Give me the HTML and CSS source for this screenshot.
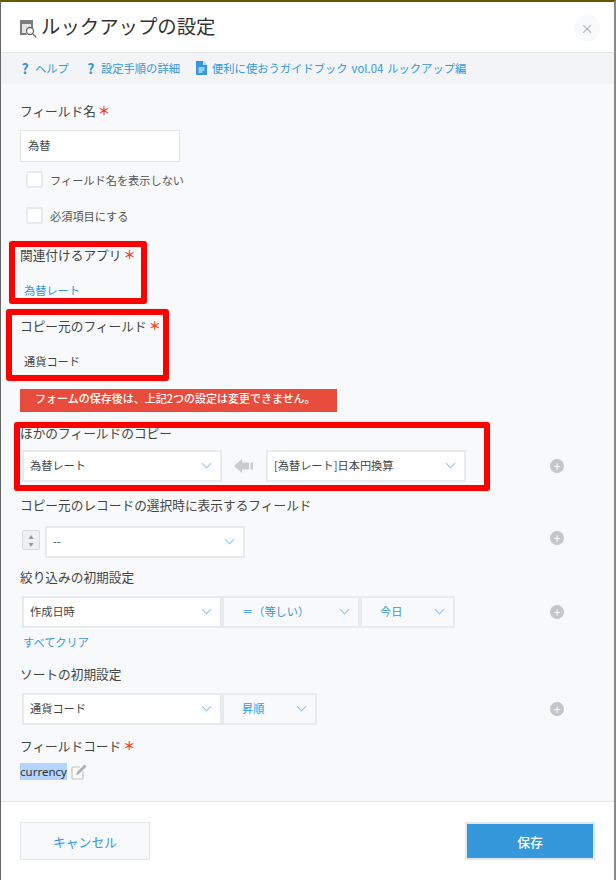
FILE: index.html
```html
<!DOCTYPE html>
<html lang="ja">
<head>
  <meta charset="UTF-8">
  <title>ルックアップの設定</title>
  <link rel="stylesheet" href="styles.css">
</head>
<body>
  <div class="dialog">
    <div class="header">
      <svg class="title-icon" width="17" height="18" viewBox="0 0 17 18">
        <path d="M0 0h13v8a5 5 0 0 0-6 7H0z" fill="#7c7c7c"/>
        <path d="M2 4h9v4a5 5 0 0 0-5 5H2z" fill="#e4e4e4"/>
        <circle cx="10" cy="11" r="3.500" fill="#fff" stroke="#666" stroke-width="1.300"/>
        <path d="M12.600 13.600l3.600 3.600" stroke="#666" stroke-width="1.300"/>
      </svg>
      <div class="title">ルックアップの設定</div>
      <div class="close">×</div>
    </div>
    <div class="links">
      <a class="link"><span class="q">?</span>ヘルプ</a>
      <a class="link"><span class="q">?</span>設定手順の詳細</a>
      <a class="link guide">
        <svg width="11" height="14" viewBox="0 0 11 14">
          <path d="M0 0h7l4 4v10H0z" fill="#3498db"/>
          <path d="M7 0v4h4z" fill="#bfe0f5"/>
          <path d="M2.500 7h6M2.500 9h6M2.500 11h4" stroke="#fff" stroke-width="1"/>
        </svg>便利に使おうガイドブック vol.04 ルックアップ編</a>
    </div>

    <div class="content">
      <div class="label first">フィールド名<span class="req">＊</span></div>
      <div class="input">為替</div>
      <div class="check-row"><span class="check"></span>フィールド名を表示しない</div>
      <div class="check-row second"><span class="check"></span>必須項目にする</div>

      <div class="label app-label">関連付けるアプリ<span class="req">＊</span></div>
      <div class="value value-link">為替レート</div>

      <div class="label src-label">コピー元のフィールド<span class="req">＊</span></div>
      <div class="value">通貨コード</div>

      <div class="alert">フォームの保存後は、上記2つの設定は変更できません。</div>

      <div class="label copy-label">ほかのフィールドのコピー</div>
      <div class="row copy-row">
        <div class="select w200">為替レート<i class="chev"></i></div>
        <svg class="arrow" width="20" height="14" viewBox="0 0 20 14">
          <path d="M0 7l8-7v3.500h7v7H8V14z" fill="#c9cccf"/>
          <path d="M16.500 3.500H19v7h-2.500z" fill="#c9cccf"/>
        </svg>
        <div class="select w200">[為替レート]日本円換算<i class="chev"></i></div>
        <span class="plus">+</span>
      </div>

      <div class="label show-label">コピー元のレコードの選択時に表示するフィールド</div>
      <div class="row show-row">
        <div class="spin"><span>▲</span><span>▼</span></div>
        <div class="select w200">--<i class="chev"></i></div>
        <span class="plus">+</span>
      </div>

      <div class="label filter-label">絞り込みの初期設定</div>
      <div class="row joined">
        <div class="select w200">作成日時<i class="chev"></i></div>
        <div class="select op w138">＝（等しい）<i class="chev"></i></div>
        <div class="select op w95">今日<i class="chev"></i></div>
        <span class="plus">+</span>
      </div>
      <div class="clear">すべてクリア</div>

      <div class="label sort-label">ソートの初期設定</div>
      <div class="row joined">
        <div class="select w200">通貨コード<i class="chev"></i></div>
        <div class="select op w95">昇順<i class="chev"></i></div>
        <span class="plus">+</span>
      </div>

      <div class="label code-label">フィールドコード<span class="req">＊</span></div>
      <div class="code-row">
        <span class="code">currency</span>
        <svg width="16" height="16" viewBox="0 0 16 16">
          <path d="M12 7.500V14a1 1 0 0 1-1 1H2a1 1 0 0 1-1-1V4a1 1 0 0 1 1-1h7" fill="none" stroke="#c4c4c4" stroke-width="1.200"/>
          <path d="M13.500 0.500l2 2L8 10l-3 1 1-3z" fill="#b0b0b0"/>
        </svg>
      </div>
    </div>

    <div class="footer">
      <button class="btn cancel">キャンセル</button>
      <button class="btn save">保存</button>
    </div>

    <div class="mark mark-app"></div>
    <div class="mark mark-src"></div>
    <div class="mark mark-copy"></div>
  </div>
</body>
</html>
```

FILE: styles.css
```css
* {
  box-sizing: border-box;
}
html, body {
  margin: 0;
  padding: 0;
  background: #fff;
}
body {
  font-family: "Noto Sans CJK JP", "Noto Sans", sans-serif;
  color: #333;
}
.dialog {
  position: relative;
  width: 616px;
  height: 880px;
  display: flex;
  flex-direction: column;
  border-top: 2px solid #6b5600;
  border-left: 1px solid #666;
  border-right: 2px solid #8a8a8a;
  overflow: hidden;
}
.header {
  height: 51px;
  flex: none;
  display: flex;
  align-items: center;
  background: #fff;
  border-bottom: 1px solid #e3e7e8;
  padding: 0 14px 0 19px;
}
.title-icon {
  margin-right: 4px;
  margin-top: 4px;
}
.title {
  font-size: 19.4px;
  line-height: 26px;
  color: #333;
  flex: 1;
  margin-top: -2px;
}
.close {
  width: 26px;
  height: 26px;
  border-radius: 50%;
  background: #f7f9fa;
  color: #a8a8a8;
  font-size: 13px;
  line-height: 26px;
  text-align: center;
  margin-top: 2px;
}
.links {
  height: 31px;
  flex: none;
  display: flex;
  align-items: center;
  gap: 17px;
  padding: 0 0 2px 19px;
  background: #f2f4f6;
}
.link {
  display: flex;
  align-items: center;
  gap: 5px;
  font-size: 11.3px;
  color: #3498db;
}
.guide {
  margin-left: -1px;
  word-spacing: 1.5px;
}
.q {
  width: 10px;
  text-align: center;
  font-size: 14px;
  font-weight: 700;
  line-height: 1;
}
.content {
  flex: 1;
  background: #f7f9fa;
  padding: 0 19px;
}
.label {
  font-size: 12.7px;
  line-height: 18px;
  color: #444;
}
.req {
  color: #f0442e;
  font-size: 12px;
  font-weight: 700;
  line-height: 18px;
  margin-left: 2px;
}
.first {
  margin-top: 18px;
}
.input {
  width: 160px;
  height: 32px;
  margin-top: 10px;
  padding-left: 7px;
  background: #fff;
  border: 1px solid #e3e7e8;
  font-size: 11.2px;
  line-height: 29px;
  color: #444;
}
.check-row {
  display: flex;
  align-items: center;
  gap: 7px;
  height: 17px;
  margin: 9px 0 0 6px;
  font-size: 11.2px;
  color: #555;
}
.check-row.second {
  margin-top: 19px;
}
.check {
  width: 17px;
  height: 17px;
  background: #fff;
  border: 2px solid #e8ebed;
  border-radius: 2px;
}
.app-label {
  margin-top: 22px;
}
.value {
  font-size: 11.2px;
  line-height: 16px;
  margin: 18px 0 0 4px;
  color: #444;
}
.value-link {
  color: #3498db;
}
.src-label {
  margin-top: 19px;
}
.alert {
  width: 317px;
  height: 23px;
  margin-top: 20px;
  padding-left: 15px;
  background: #e74c3c;
  color: #fff;
  font-size: 11px;
  font-weight: 500;
  line-height: 19px;
}
.copy-label {
  margin-top: 12px;
}
.row {
  position: relative;
  display: flex;
  align-items: center;
  margin-left: 2px;
  height: 32px;
}
.copy-row {
  margin-top: 8px;
}
.select {
  position: relative;
  height: 32px;
  background: #fff;
  border: 2px solid #e8ebed;
  font-size: 11.2px;
  line-height: 27px;
  padding-left: 6px;
  color: #444;
}
.w200 {
  width: 200px;
}
.w138 {
  width: 138px;
}
.w95 {
  width: 95px;
}
.select.op {
  background: #f7f9fa;
  color: #3498db;
  padding-left: 18px;
}
.chev {
  position: absolute;
  right: 10px;
  top: 8px;
  width: 7px;
  height: 7px;
  border-right: 1px solid #8ec7ee;
  border-bottom: 1px solid #8ec7ee;
  transform: rotate(45deg);
}
.arrow {
  margin: 0 12px;
}
.plus {
  position: absolute;
  left: 528px;
  top: 9px;
  width: 14px;
  height: 14px;
  border-radius: 50%;
  background: #c4c6c8;
  color: #fff;
  font-size: 12px;
  line-height: 13px;
  text-align: center;
}
.show-label {
  margin-top: 14px;
}
.show-row {
  margin-top: 12px;
}
.show-row .plus {
  top: 5px;
}
.spin {
  width: 18px;
  height: 20px;
  margin: -4px 5px 0 0;
  display: flex;
  flex-direction: column;
  align-items: center;
  justify-content: center;
  background: #eef0f2;
  border: 1px solid #d8dbdd;
  border-radius: 2px;
  color: #999;
  font-size: 5px;
  line-height: 7px;
}
.filter-label {
  margin-top: 10px;
}
.filter-label + .row {
  margin-top: 10px;
}
.clear {
  margin: 6px 0 0 3px;
  font-size: 11.2px;
  line-height: 16px;
  color: #3498db;
}
.sort-label {
  margin-top: 15px;
}
.sort-label + .row {
  margin-top: 10px;
}
.code-label {
  margin-top: 12px;
}
.code-row {
  display: flex;
  align-items: center;
  gap: 4px;
  margin-top: 8px;
}
.code {
  background: #b3d4fc;
  font-family: "Noto Sans", sans-serif;
  font-size: 11.5px;
  line-height: 17px;
}
.footer {
  height: 79px;
  flex: none;
  display: flex;
  justify-content: space-between;
  padding: 20px 19px 0;
  background: #fff;
  border-top: 1px solid #e3e7e8;
}
.btn {
  width: 130px;
  height: 38px;
  font-family: inherit;
  font-size: 12.8px;
  border: 1px solid #e3e7e8;
}
.cancel {
  background: #f7f9fa;
  color: #3498db;
}
.save {
  background: #3498db;
  color: #fff;
  border: 2px solid #e3e7e8;
  font-weight: 500;
}
.mark {
  position: absolute;
  border: 6px solid #f00;
  border-radius: 3px;
  box-shadow: 0 0 1px rgba(0,0,0,.4);
}
.mark-app {
  left: 8px;
  top: 239px;
  width: 138px;
  height: 63px;
}
.mark-src {
  left: 5px;
  top: 307px;
  width: 163px;
  height: 72px;
}
.mark-copy {
  left: 13px;
  top: 420px;
  width: 476px;
  height: 69px;
}
```
